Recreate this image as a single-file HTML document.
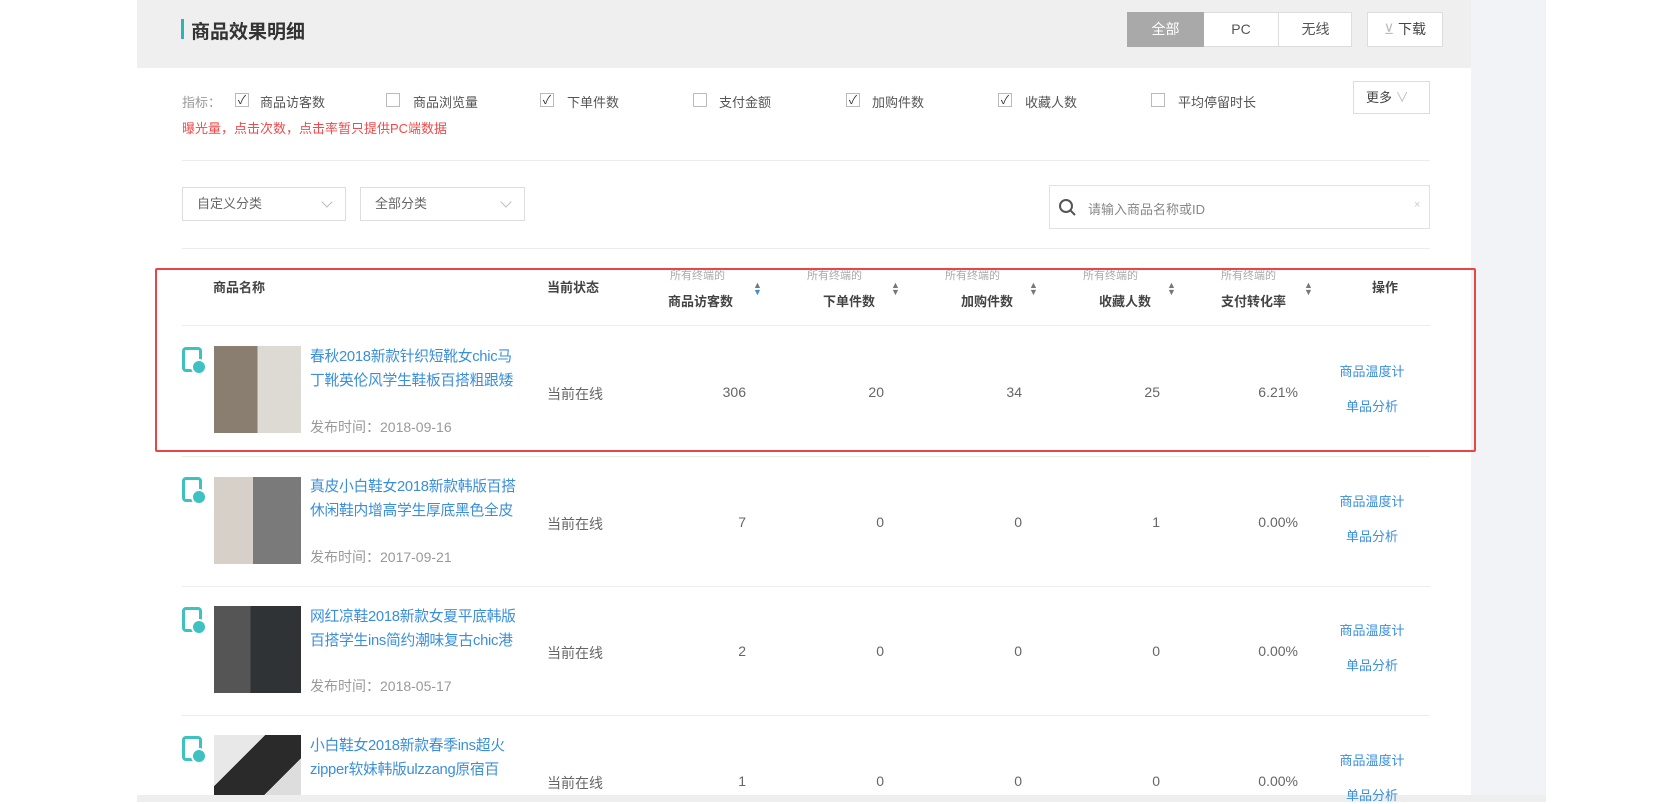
<!DOCTYPE html>
<html><head><meta charset="utf-8"><style>
*{margin:0;padding:0;box-sizing:border-box}
body{width:1676px;height:802px;position:relative;overflow:hidden;background:#fff;font-family:"Liberation Sans","Noto Sans CJK SC",sans-serif;color:#555;font-size:13px}
.a{position:absolute;white-space:nowrap}
.cb{position:absolute;width:14px;height:14px;border:1px solid #bbb;background:#fff;top:93px;font-size:12px;line-height:12px;text-align:center;color:#333}
.lb{position:absolute;top:92px;font-size:13px;color:#555}
.sel{position:absolute;border:1px solid #ddd;background:#fff;height:34px;top:187px;font-size:13px;color:#666;line-height:32px;padding-left:14px}
.sel i{position:absolute;right:14px;top:10px;width:8px;height:8px;border-right:1px solid #bbb;border-bottom:1px solid #bbb;transform:rotate(45deg)}
.hd1{position:absolute;top:267px;font-size:11px;color:#aaa}
.hd2{position:absolute;top:291px;font-size:13px;color:#444;font-weight:bold}
.srt{position:absolute;font-size:9px;line-height:7px;color:#777}
.thumb{position:absolute;width:87px;height:87px;left:214px}
.ph{position:absolute;left:182px;width:20px;height:25px;border:3px solid #3ec1c1;border-radius:4px}
.ph:after{content:"";position:absolute;right:-8px;bottom:-6px;width:12px;height:12px;border-radius:50%;background:#3ec1c1;border:2px solid #fff}
.t{position:absolute;left:310px;font-size:14.8px;color:#3b8fd9;line-height:24px;letter-spacing:-0.3px}
.d{position:absolute;left:310px;font-size:14px;color:#999}
.n{position:absolute;font-size:14px;color:#666;text-align:right;width:80px}
.op{position:absolute;left:1334px;width:76px;text-align:center;font-size:13px;color:#3b8fd9}
.hr{position:absolute;left:182px;width:1248px;height:1px;background:#ececec}
</style></head><body>
<div class="a" style="left:137px;top:0;width:1334px;height:68px;background:#efefef"></div>
<div class="a" style="left:137px;top:68px;width:1334px;height:734px;background:#fff"></div>
<div class="a" style="left:1471px;top:0;width:75px;height:802px;background:#f1f3f6"></div>
<div class="a" style="left:137px;top:795px;width:1409px;height:7px;background:#eee"></div>
<div class="a" style="left:181px;top:19px;width:3px;height:20px;background:#2bb5b5"></div>
<div class="a" style="left:191px;top:17px;font-size:19px;color:#333;font-weight:bold">商品效果明细</div>
<div class="a" style="left:1127px;top:12px;width:225px;height:35px;border:1px solid #ddd;background:#fff"></div>
<div class="a" style="left:1127px;top:12px;width:77px;height:35px;background:#a9a9a9;color:#fff;font-size:14px;line-height:35px;text-align:center">全部</div>
<div class="a" style="left:1204px;top:12px;width:75px;height:35px;border-right:1px solid #ddd;font-size:14px;line-height:35px;text-align:center;color:#555">PC</div>
<div class="a" style="left:1279px;top:12px;width:73px;height:35px;font-size:14px;line-height:35px;text-align:center;color:#555">无线</div>
<div class="a" style="left:1367px;top:12px;width:76px;height:35px;border:1px solid #ddd;background:#fff;font-size:14px;line-height:33px;text-align:center;color:#444"><span style="color:#bbb">⊻</span> 下载</div>

<div class="lb" style="left:182px;color:#999">指标：</div>
<div class="cb" style="left:235px">✓</div><div class="lb" style="left:260px">商品访客数</div>
<div class="cb" style="left:386px"></div><div class="lb" style="left:413px">商品浏览量</div>
<div class="cb" style="left:540px">✓</div><div class="lb" style="left:567px">下单件数</div>
<div class="cb" style="left:693px"></div><div class="lb" style="left:719px">支付金额</div>
<div class="cb" style="left:846px">✓</div><div class="lb" style="left:872px">加购件数</div>
<div class="cb" style="left:998px">✓</div><div class="lb" style="left:1025px">收藏人数</div>
<div class="cb" style="left:1151px"></div><div class="lb" style="left:1178px">平均停留时长</div>
<div class="a" style="left:1353px;top:81px;width:77px;height:33px;border:1px solid #ddd;font-size:13px;line-height:31px;padding-left:12px;color:#444">更多 <span style="color:#bbb">∨</span></div>
<div class="a" style="left:182px;top:118px;font-size:13px;color:#f04a4a">曝光量，点击次数，点击率暂只提供PC端数据</div>
<div class="hr" style="top:160px"></div>

<div class="sel" style="left:182px;width:164px">自定义分类<i></i></div>
<div class="sel" style="left:360px;width:165px">全部分类<i></i></div>
<div class="a" style="left:1049px;top:185px;width:381px;height:44px;border:1px solid #e2e2e2;background:#fff"></div>
<svg class="a" style="left:1058px;top:198px" width="20" height="20"><circle cx="8" cy="8" r="6" fill="none" stroke="#555" stroke-width="2"/><line x1="12.5" y1="12.5" x2="17" y2="17" stroke="#555" stroke-width="2"/></svg>
<div class="a" style="left:1088px;top:199px;font-size:13px;color:#888">请输入商品名称或ID</div>
<div class="a" style="left:1414px;top:199px;font-size:11px;color:#ccc">×</div>
<div class="hr" style="top:248px"></div>

<div class="a" style="left:155px;top:268px;width:1321px;height:184px;border:2px solid #e84545;border-radius:2px"></div>
<div class="hd2" style="left:213px;top:277px">商品名称</div>
<div class="hd2" style="left:547px;top:277px">当前状态</div>
<div class="hd1" style="left:670px">所有终端的</div><div class="hd2" style="left:668px">商品访客数</div><div class="srt" style="left:753px;top:282px">▲<br><span style="color:#3b8fd9">▼</span></div>
<div class="hd1" style="left:807px">所有终端的</div><div class="hd2" style="left:823px">下单件数</div><div class="srt" style="left:891px;top:282px">▲<br>▼</div>
<div class="hd1" style="left:945px">所有终端的</div><div class="hd2" style="left:961px">加购件数</div><div class="srt" style="left:1029px;top:282px">▲<br>▼</div>
<div class="hd1" style="left:1083px">所有终端的</div><div class="hd2" style="left:1099px">收藏人数</div><div class="srt" style="left:1167px;top:282px">▲<br>▼</div>
<div class="hd1" style="left:1221px">所有终端的</div><div class="hd2" style="left:1221px">支付转化率</div><div class="srt" style="left:1304px;top:282px">▲<br>▼</div>
<div class="hd2" style="left:1372px;top:277px">操作</div>
<div class="hr" style="top:325px"></div>

<div class="ph" style="top:347px"></div>
<div class="thumb" style="top:346px;background:linear-gradient(90deg,#8a7e70 0 50%,#ddd9d3 50%)"></div>
<div class="t" style="top:345px">春秋2018新款针织短靴女chic马<br>丁靴英伦风学生鞋板百搭粗跟矮</div>
<div class="d" style="top:417px">发布时间：2018-09-16</div>
<div class="a" style="left:547px;top:384px;font-size:14px;color:#666">当前在线</div>
<div class="n" style="left:666px;top:384px">306</div><div class="n" style="left:804px;top:384px">20</div><div class="n" style="left:942px;top:384px">34</div><div class="n" style="left:1080px;top:384px">25</div><div class="n" style="left:1218px;top:384px">6.21%</div>
<div class="op" style="top:361px">商品温度计</div><div class="op" style="top:396px">单品分析</div>
<div class="hr" style="top:456px"></div>

<div class="ph" style="top:477px"></div>
<div class="thumb" style="top:477px;background:linear-gradient(90deg,#d6d0c8 0 45%,#7a7a7a 45%)"></div>
<div class="t" style="top:475px">真皮小白鞋女2018新款韩版百搭<br>休闲鞋内增高学生厚底黑色全皮</div>
<div class="d" style="top:547px">发布时间：2017-09-21</div>
<div class="a" style="left:547px;top:514px;font-size:14px;color:#666">当前在线</div>
<div class="n" style="left:666px;top:514px">7</div><div class="n" style="left:804px;top:514px">0</div><div class="n" style="left:942px;top:514px">0</div><div class="n" style="left:1080px;top:514px">1</div><div class="n" style="left:1218px;top:514px">0.00%</div>
<div class="op" style="top:491px">商品温度计</div><div class="op" style="top:526px">单品分析</div>
<div class="hr" style="top:586px"></div>

<div class="ph" style="top:607px"></div>
<div class="thumb" style="top:606px;background:linear-gradient(90deg,#555 0 42%,#2f3336 42%)"></div>
<div class="t" style="top:605px">网红凉鞋2018新款女夏平底韩版<br>百搭学生ins简约潮味复古chic港</div>
<div class="d" style="top:676px">发布时间：2018-05-17</div>
<div class="a" style="left:547px;top:643px;font-size:14px;color:#666">当前在线</div>
<div class="n" style="left:666px;top:643px">2</div><div class="n" style="left:804px;top:643px">0</div><div class="n" style="left:942px;top:643px">0</div><div class="n" style="left:1080px;top:643px">0</div><div class="n" style="left:1218px;top:643px">0.00%</div>
<div class="op" style="top:620px">商品温度计</div><div class="op" style="top:655px">单品分析</div>
<div class="hr" style="top:715px"></div>

<div class="ph" style="top:736px"></div>
<div class="thumb" style="top:735px;height:60px;background:linear-gradient(135deg,#e8e8e8 0 35%,#2a2a2a 35% 75%,#ddd 75%)"></div>
<div class="t" style="top:734px">小白鞋女2018新款春季ins超火<br>zipper软妹韩版ulzzang原宿百</div>
<div class="a" style="left:547px;top:773px;font-size:14px;color:#666">当前在线</div>
<div class="n" style="left:666px;top:773px">1</div><div class="n" style="left:804px;top:773px">0</div><div class="n" style="left:942px;top:773px">0</div><div class="n" style="left:1080px;top:773px">0</div><div class="n" style="left:1218px;top:773px">0.00%</div>
<div class="op" style="top:750px">商品温度计</div><div class="op" style="top:785px">单品分析</div>
</body></html>
